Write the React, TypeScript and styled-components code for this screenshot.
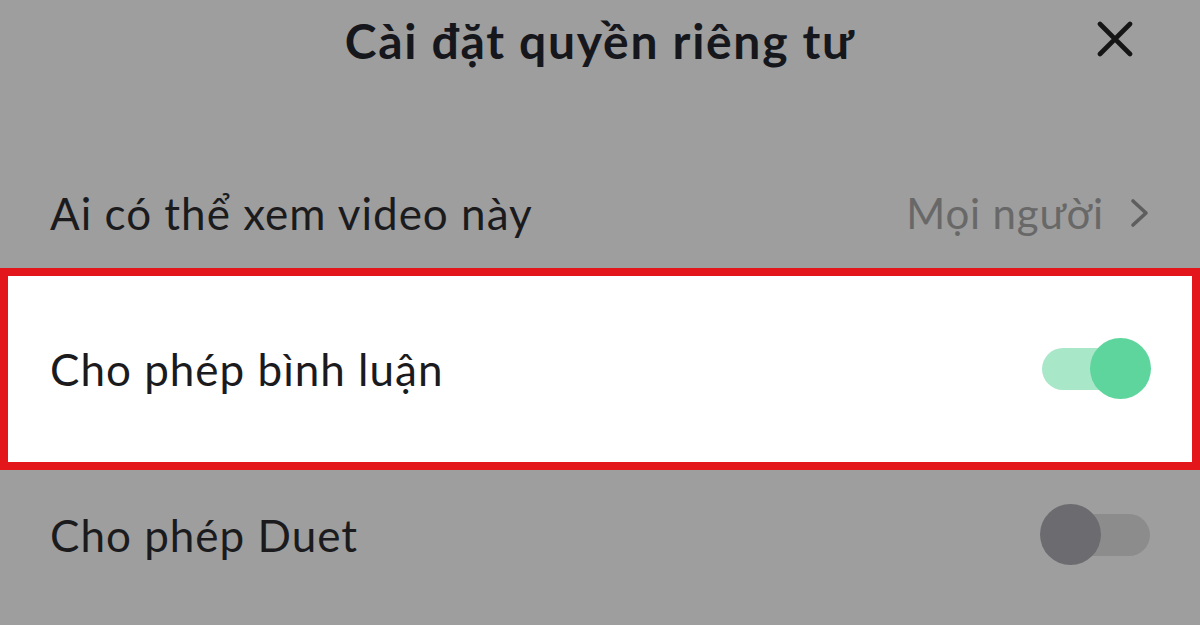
import React from 'react';
import styled, { createGlobalStyle } from 'styled-components';

const GlobalStyle = createGlobalStyle`
  html, body {
    margin: 0;
    padding: 0;
    background: #9e9e9e;
  }
  body {
    font-family: Lato, "Noto Sans", sans-serif;
  }
`;

const Page = styled.div`
  width: 1200px;
  height: 625px;
  overflow: hidden;
  background: #9e9e9e;
  display: flex;
  flex-direction: column;
`;

const Header = styled.div`
  height: 80px;
  display: flex;
  align-items: center;
  justify-content: center;
  position: relative;
`;

const Title = styled.h1`
  margin: 0;
  font-size: 48px;
  font-weight: 700;
  color: #16171c;
  letter-spacing: 1.7px;
`;

const CloseButton = styled.button`
  position: absolute;
  right: 64px;
  top: 18px;
  width: 42px;
  height: 42px;
  padding: 0;
  border: none;
  background: transparent;
  display: flex;
  align-items: center;
  justify-content: center;
`;

const List = styled.div`
  padding-top: 78px;
  display: flex;
  flex-direction: column;
`;

const Row = styled.div<{ $height: number; $highlight?: boolean }>`
  height: ${(p) => p.$height}px;
  box-sizing: border-box;
  display: flex;
  align-items: center;
  justify-content: space-between;
  padding: 0 ${(p) => (p.$highlight ? 42 : 50)}px;
  background: ${(p) => (p.$highlight ? '#ffffff' : 'transparent')};
  border: ${(p) => (p.$highlight ? '8px solid #e3161c' : 'none')};
`;

const Label = styled.span`
  font-size: 44px;
  color: #1b1b1e;
  letter-spacing: 1px;
`;

const Value = styled.div`
  display: flex;
  align-items: center;
  gap: 26px;
  font-size: 42px;
  color: #686868;
  letter-spacing: 0.8px;
`;

const Track = styled.div<{ $on: boolean }>`
  width: 110px;
  height: 62px;
  position: relative;
  &::before {
    content: '';
    position: absolute;
    left: 2px;
    right: 0;
    top: 10px;
    height: 42px;
    border-radius: 21px;
    background: ${(p) => (p.$on ? '#a9e7c9' : '#8c8c8c')};
  }
`;

const Thumb = styled.div<{ $on: boolean }>`
  position: absolute;
  top: 0;
  ${(p) => (p.$on ? 'right: -1px;' : 'left: 0;')}
  width: 61px;
  height: 61px;
  border-radius: 50%;
  background: ${(p) => (p.$on ? '#5dd59c' : '#6c6c70')};
`;

const Toggle: React.FC<{ on: boolean }> = ({ on }) => (
  <Track $on={on}>
    <Thumb $on={on} />
  </Track>
);

export default function App() {
  return (
    <Page>
      <GlobalStyle />
      <Header>
        <Title>Cài đặt quyền riêng tư</Title>
        <CloseButton aria-label="Đóng">
          <svg width="36" height="36" viewBox="0 0 36 36">
            <path d="M3 3 L33 33 M33 3 L3 33" stroke="#151515" strokeWidth="4.6" strokeLinecap="round" fill="none" />
          </svg>
        </CloseButton>
      </Header>
      <List>
        <Row $height={110}>
          <Label>Ai có thể xem video này</Label>
          <Value>
            Mọi người
            <svg width="20" height="30" viewBox="0 0 20 30">
              <path d="M3 3 L16 15 L3 27" stroke="#5e5e5e" strokeWidth="3.6" strokeLinecap="round" strokeLinejoin="round" fill="none" />
            </svg>
          </Value>
        </Row>
        <Row $height={202} $highlight>
          <Label>Cho phép bình luận</Label>
          <Toggle on />
        </Row>
        <Row $height={130}>
          <Label>Cho phép Duet</Label>
          <Toggle on={false} />
        </Row>
      </List>
    </Page>
  );
}
